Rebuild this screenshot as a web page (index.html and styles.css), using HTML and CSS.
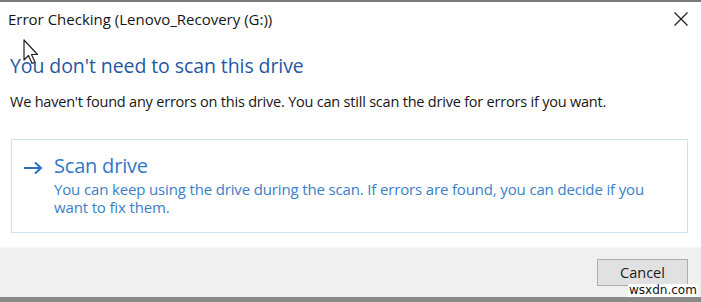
FILE: index.html
```html
<!DOCTYPE html>
<html>
<head>
<meta charset="utf-8">
<link rel="stylesheet" href="styles.css">
</head>
<body>
<div class="window">
  <div class="main">
    <div class="titlebar">
      <span class="title">Error Checking (Lenovo_Recovery (G:))</span>
      <svg class="close" width="16" height="16" viewBox="0 0 16 16"><path d="M1.5 1.5 L14.5 14.5 M14.5 1.5 L1.5 14.5" stroke="#222" stroke-width="1.3" fill="none"/></svg>
    </div>
    <h1 class="heading">You don't need to scan this drive</h1>
    <p class="message">We haven't found any errors on this drive. You can still scan the drive for errors if you want.</p>
    <div class="option">
      <svg class="arrow" width="20" height="14" viewBox="0 0 20 14"><path d="M1 7 H18 M12 1.5 L18 7 L12 12.5" stroke="#2a6fbf" stroke-width="2" fill="none"/></svg>
      <div class="option-text">
        <div class="option-title">Scan drive</div>
        <div class="option-desc">You can keep using the drive during the scan. If errors are found, you can decide if you want to fix them.</div>
      </div>
    </div>
  </div>
  <div class="footer">
    <button class="btn">Cancel</button>
  </div>
  <svg class="cursor" width="18" height="26" viewBox="0 0 18 26"><path d="M1 1 V21 L5.5 16.5 L9 24.5 L12 23 L8.5 15.5 H14.5 Z" fill="#fff" stroke="#222" stroke-width="1.2" stroke-linejoin="round"/></svg>
  <span class="watermark">wsxdn.com</span>
</div>
</body>
</html>
```

FILE: styles.css
```css
* { box-sizing: border-box; }
html, body { margin: 0; padding: 0; background: #fff; }
body { font-family: "Open Sans", "Noto Sans", sans-serif; }
.window {
  position: relative;
  width: 701px;
  height: 302px;
  display: flex;
  flex-direction: column;
  border-top: 2px solid #7a7a7a;
  border-bottom: 5px solid #8a8a8a;
  overflow: hidden;
}
.main {
  background: #fff;
  height: 245px;
  padding: 0 13px 0 10px;
}
.titlebar {
  display: flex;
  justify-content: space-between;
  align-items: center;
  height: 34px;
}
.title {
  font-size: 15px;
  color: #161616;
  margin-left: -2px;
  letter-spacing: 0;
}
.close { margin-right: -1px; margin-top: -1px; }
.heading {
  margin: 17px 0 0 0;
  font-weight: normal;
  font-size: 19.5px;
  color: #1f58a4;
  line-height: 26px;
  letter-spacing: -0.08px;
}
.message {
  margin: 13px 0 0 0;
  font-size: 14.5px;
  color: #161616;
  line-height: 20px;
  letter-spacing: -0.21px;
}
.option {
  margin: 27px 0 0 1px;
  border: 1px solid #cfe2ef;
  height: 94px;
  display: flex;
  padding: 13px 12px 0 11px;
}
.arrow { margin-top: 8px; flex: none; }
.option-text { margin-left: 11px; }
.option-title {
  font-size: 20px;
  color: #2f78c6;
  line-height: 26px;
  letter-spacing: -0.2px;
}
.option-desc {
  font-size: 15px;
  color: #3a80c8;
  line-height: 18px;
  letter-spacing: -0.15px;
  margin-top: 1px;
}
.footer {
  flex: 1;
  background: #f0f0f0;
  border-top: 1px solid #f4f4f4;
  display: flex;
  justify-content: flex-end;
  align-items: flex-start;
  padding: 11px 13px 0 0;
}
.btn {
  width: 91px;
  height: 27px;
  background: #e1e1e1;
  border: 1px solid #adadad;
  font-family: "Open Sans", "Noto Sans", sans-serif;
  font-size: 14.5px;
  color: #1a1a1a;
  padding: 0;
}
.cursor { position: absolute; left: 23px; top: 37px; }
.watermark {
  position: absolute;
  left: 628px;
  top: 282px;
  font-family: "DejaVu Sans", sans-serif;
  font-size: 12px;
  color: #111;
  background: #fff;
  padding: 0 1px;
  line-height: 13px;
}
```
